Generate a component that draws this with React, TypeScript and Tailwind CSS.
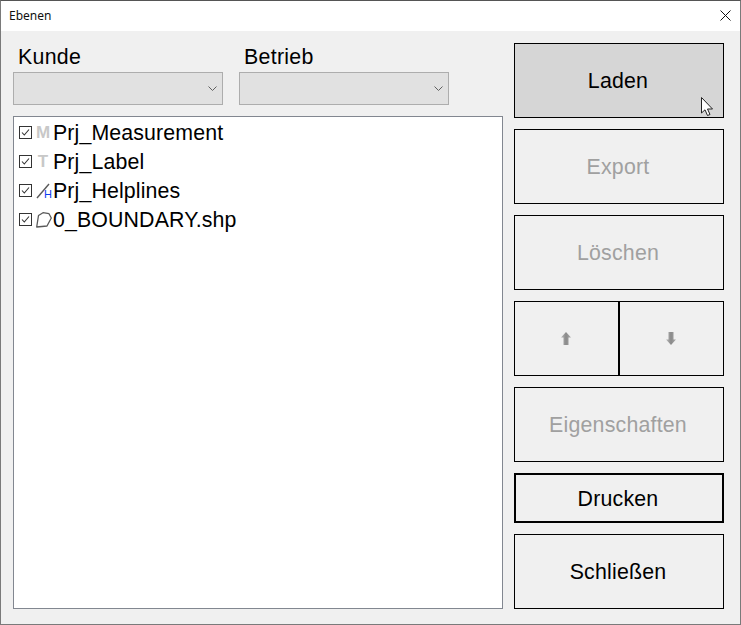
import React from 'react';

const rows = [
  { name: 'Prj_Measurement', icon: 'M' },
  { name: 'Prj_Label', icon: 'T' },
  { name: 'Prj_Helplines', icon: 'H' },
  { name: '0_BOUNDARY.shp', icon: 'B' },
];

function LayerIcon({ kind }: { kind: string }) {
  if (kind === 'M' || kind === 'T') return <span className="w-[14px] text-center text-[17px] leading-none font-bold text-[#c8c8c8]">{kind}</span>;
  if (kind === 'H')
    return (
      <span className="relative block w-[16px] h-[16px]">
        <svg width="16" height="16" viewBox="0 0 16 16" fill="none">
          <path d="M1 15 L13 1" stroke="#5a5a5a" strokeWidth="1.4" />
        </svg>
        <span className="absolute left-[8px] top-[6px] text-[11px] leading-[11px] text-[#0a3cf0]">H</span>
      </span>
    );
  return (
    <svg width="16" height="16" viewBox="0 0 16 16" fill="none">
      <path d="M0.700 15 L2.500 3.500 L7 0.700 L13 1.700 L15.300 6 L11 14 Z" stroke="#5a5a5a" strokeWidth="1.3" strokeLinejoin="round" />
    </svg>
  );
}

function Check() {
  return (
    <svg className="-mt-[3px]" width="13" height="13" viewBox="0 0 13 13" fill="none">
      <rect x="0.5" y="0.5" width="12" height="12" stroke="#333" />
      <path d="M3 6.500 L5.300 9 L10 3.500" stroke="#333" strokeWidth="1.1" />
    </svg>
  );
}

function Combo() {
  return (
    <div className="w-[210px] h-[33px] bg-[#e1e1e1] border border-[#adadad] flex items-center justify-end pr-[5px]">
      <svg width="9" height="6" viewBox="0 0 9 6" fill="none">
        <path d="M0.500 0.500 L4.500 4.500 L8.500 0.500" stroke="#606060" />
      </svg>
    </div>
  );
}

function Btn({ label, h = 'h-[75px]', extra = 'pt-[2px]', text = 'text-black' }: { label: string; h?: string; extra?: string; text?: string }) {
  return (
    <div className={`w-[210px] ${h} border border-black flex items-center justify-center pr-[2px] text-[21.33px] tracking-[0.2px] ${text} ${extra}`}>
      {label}
    </div>
  );
}

export default function App() {
  return (
    <div className="w-[741px] h-[625px] bg-[#f0f0f0] border border-[#7a7a7a] border-t-[#555] font-['Liberation_Sans',sans-serif] overflow-hidden relative">
      <div className="h-[30px] bg-white flex items-center justify-between pl-[8px] pr-[9px]">
        <span className="text-[12px] text-[#101010] font-['Noto_Sans',sans-serif]">Ebenen</span>
        <svg className="-mt-[1px]" width="11" height="11" viewBox="0 0 11 11" fill="none">
          <path d="M0.500 0.500 L10.500 10.500 M10.500 0.500 L0.500 10.500" stroke="#111" />
        </svg>
      </div>
      <div className="flex pl-[12px] pt-[12px] gap-[11px]">
        <div className="w-[490px] flex flex-col">
          <div className="flex gap-[16px] pt-[2px] h-[29px] text-[21.33px] leading-[24px] tracking-[0.3px] text-black">
            <span className="w-[210px] pl-[5px]">Kunde</span>
            <span className="w-[210px] pl-[5px]">Betrieb</span>
          </div>
          <div className="flex gap-[16px]">
            <Combo />
            <Combo />
          </div>
          <div className="mt-[11px] h-[493px] bg-white border border-[#828790] pt-[2px] pl-[5px]">
            {rows.map((r) => (
              <div key={r.name} className="h-[29px] flex items-center text-[21.33px] tracking-[0.13px] text-black">
                <Check />
                <span className="ml-[4px] -mt-[2px] flex w-[16px] items-center"><LayerIcon kind={r.icon} /></span>
                <span className="ml-[1px]">{r.name}</span>
              </div>
            ))}
          </div>
        </div>
        <div className="w-[210px] flex flex-col gap-[11px]">
          <Btn label="Laden" extra="pt-[2px] bg-[#d6d6d6]" />
          <Btn label="Export" text="text-[#a0a0a0]" />
          <Btn label="Löschen" text="text-[#a0a0a0]" />
          <div className="flex h-[75px]">
            <div className="w-[105px] border border-black flex items-center justify-center pr-[2px]">
              <svg width="10" height="13" viewBox="0 0 10 13">
                <defs>
                  <linearGradient id="arrowUp" x1="0" x2="1" y1="0" y2="0">
                    <stop offset="0" stopColor="#b8b8b8" />
                    <stop offset="0.5" stopColor="#8a8a8a" />
                    <stop offset="1" stopColor="#a8a8a8" />
                  </linearGradient>
                </defs>
                <path d="M5 0 L10 5.500 L7.500 5.500 L7.500 13 L2.500 13 L2.500 5.500 L0 5.500 Z" fill="url(#arrowUp)" />
              </svg>
            </div>
            <div className="w-[105px] border border-black flex items-center justify-center pr-[2px]">
              <svg width="10" height="13" viewBox="0 0 10 13">
                <path d="M5 13 L10 7.500 L7.500 7.500 L7.500 0 L2.500 0 L2.500 7.500 L0 7.500 Z" fill="url(#arrowUp)" />
              </svg>
            </div>
          </div>
          <Btn label="Eigenschaften" text="text-[#a0a0a0]" />
          <Btn label="Drucken" h="h-[50px]" extra="border-2 pt-[3px]" />
          <Btn label="Schließen" />
        </div>
      </div>
      <svg className="absolute left-[700px] top-[96px]" width="13" height="20" viewBox="0 0 13 20">
        <path d="M0.500 0.500 L0.500 16 L4 12.800 L6.500 18.500 L9 17.500 L6.500 12 L11.500 12 Z" fill="#fff" stroke="#222" />
      </svg>
    </div>
  );
}
